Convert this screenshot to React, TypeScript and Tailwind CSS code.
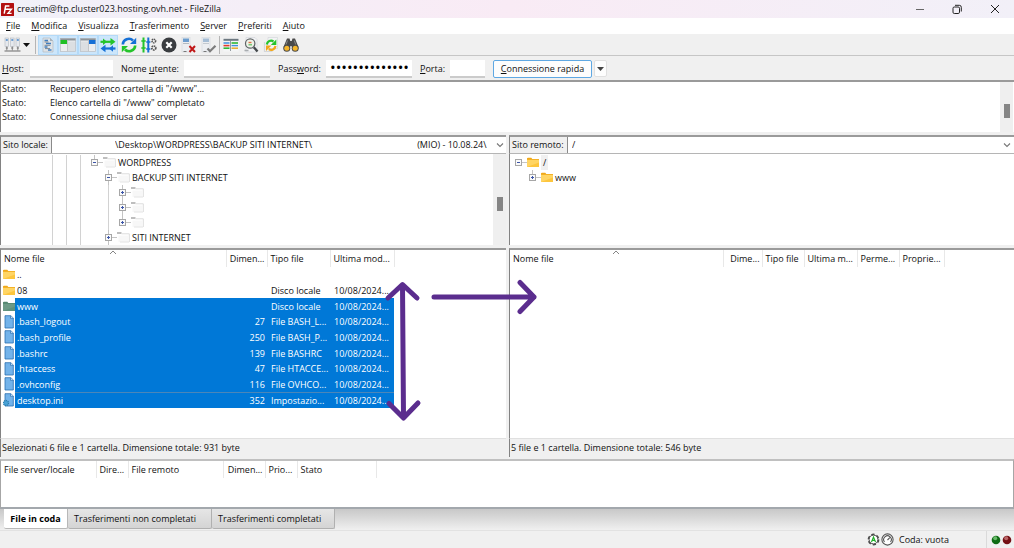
import React, { type ReactNode } from "react";

/* ---------- small drawings ---------- */

function Svg({ children, w = 16, h = 16 }: { children: ReactNode; w?: number; h?: number }) {
  return (
    <svg width={w} height={h} viewBox={`0 0 ${w} ${h}`} fill="none" aria-hidden="true" className="shrink-0">
      {children}
    </svg>
  );
}

function Logo() {
  return (
    <Svg w={13} h={13}>
      <rect width="13" height="13" rx="0.5" fill="#b30f10" />
      <path d="M3.2 10.6 4.6 3h3.8M4 6.3h3" stroke="#fff" strokeWidth="1.5" />
      <path d="M6.6 6.2h3.9L7 10.4h3.6" stroke="#fff" strokeWidth="1.4" />
    </Svg>
  );
}

function SitesIcon() {
  return (
    <Svg w={17}>
      {[1, 6.5, 12].map((x) => (
        <g key={x}>
          <rect x={x} y="1" width="3.6" height="8.500" fill="#e6e9ed" stroke="#b4bac1" strokeWidth="0.600" />
          <rect x={x + 0.8} y="2" width="2" height="2" fill="#6f9fd2" />
          <path d={`M${x + 1.8} 9.500v4`} stroke="#8a8a8a" />
          <circle cx={x + 1.8} cy="11" r="1.100" fill="#8a8a8a" />
        </g>
      ))}
      <path d="M0.500 14h16" stroke="#808080" strokeWidth="1.200" />
    </Svg>
  );
}

function LogIcon() {
  return (
    <Svg>
      <path d="M3 1h7l3 3v11H3z" fill="#dfe4e8" stroke="#b2b9bf" strokeWidth="0.7" />
      <path d="M4.500 3.500h3.500M6 6.500h5M4.500 10h3M8 13h3.500" stroke="#3f7dc0" strokeWidth="1.300" />
      <path d="M4.500 5h4M4.500 8.300h6M5 11.600h5" stroke="#7f8890" />
      <path d="M10 1v3h3" fill="#a9b1b8" />
    </Svg>
  );
}

function LocalTreeIcon() {
  return (
    <Svg>
      <rect x="0.5" y="1.5" width="15" height="13" fill="#eceef0" stroke="#b9bdc1" strokeWidth="0.7" />
      <rect x="0.5" y="1.5" width="15" height="2" fill="#8d9499" />
      <rect x="0.5" y="3" width="6.5" height="4" fill="#1fbf24" />
      <path d="M7.5 4v10.5" stroke="#c3c6c9" />
      <rect x="8" y="4.5" width="7" height="9.5" fill="#dcdfe2" />
    </Svg>
  );
}

function RemoteTreeIcon() {
  return (
    <Svg>
      <rect x="0.5" y="1.5" width="15" height="13" fill="#eceef0" stroke="#b9bdc1" strokeWidth="0.7" />
      <rect x="0.5" y="1.5" width="15" height="2" fill="#8d9499" />
      <rect x="1" y="4.5" width="7" height="9.5" fill="#dcdfe2" />
      <rect x="9" y="3" width="6.5" height="4" fill="#1670d6" />
      <path d="M8.5 4v10.5" stroke="#c3c6c9" />
    </Svg>
  );
}

function QueueIcon() {
  return (
    <Svg>
      <path d="M0.500 4.800h12" stroke="#25c42b" strokeWidth="2.200" />
      <path d="m10.500 1 5 3.800-5 3.800zM3 1.500l4 3.300-4 3.300z" fill="#25c42b" />
      <path d="M3.500 11.500h12" stroke="#1670d6" strokeWidth="2.200" />
      <path d="m5.500 7.700-5 3.800 5 3.800zM13 8.200l-4 3.300 4 3.300z" fill="#1670d6" />
    </Svg>
  );
}

function RefreshIcon() {
  return (
    <Svg>
      <path d="M1.800 7.500A6 6 0 0 1 12 3.500" stroke="#1670d6" strokeWidth="2.600" />
      <path d="M15.200 0.800v6.200H9z" fill="#1670d6" />
      <path d="M14.200 8.500A6 6 0 0 1 4 12.500" stroke="#25c42b" strokeWidth="2.600" />
      <path d="M0.800 15.200V9H7z" fill="#25c42b" />
    </Svg>
  );
}

function ProcessIcon() {
  return (
    <Svg>
      <path d="M2.500 0.500v15" stroke="#25c42b" strokeWidth="2" />
      <path d="M0.300 4h4.400M0.300 11h4.400" stroke="#25c42b" strokeWidth="1.600" />
      <path d="M7.300 0.500v15" stroke="#1670d6" strokeWidth="2" />
      <path d="M5.200 5h4.200M5.200 12h4.200" stroke="#1670d6" strokeWidth="1.600" />
      <circle cx="12.800" cy="4" r="1.800" stroke="#555" strokeWidth="1.600" strokeDasharray="1.300 0.600" />
      <circle cx="12.800" cy="11" r="2" stroke="#555" strokeWidth="1.700" strokeDasharray="1.500 0.600" />
    </Svg>
  );
}

function CancelIcon() {
  return (
    <Svg>
      <circle cx="8" cy="8" r="7.500" fill="#3a3d40" />
      <path d="m5.300 5.300 5.400 5.400m0-5.400-5.400 5.400" stroke="#fff" strokeWidth="2.200" />
    </Svg>
  );
}

function DisconnectIcon() {
  return (
    <Svg>
      <rect x="1" y="0.500" width="8" height="14.500" fill="#eceef1" stroke="#d4d8dc" strokeWidth="0.600" />
      <rect x="2" y="1.500" width="6" height="3.500" fill="#6c9dce" />
      <path d="M2 6.500h6" stroke="#b4bbc2" />
      <path d="m8.500 9 5.500 6m0-6-5.500 6" stroke="#c01818" strokeWidth="2" />
      <path d="M2.500 14.500h3" stroke="#777" />
    </Svg>
  );
}

function ReconnectIcon() {
  return (
    <Svg>
      <rect x="1" y="0.500" width="8" height="14.500" fill="#eceef1" stroke="#d4d8dc" strokeWidth="0.600" />
      <rect x="2" y="1.500" width="6" height="3.500" fill="#a5bdd5" />
      <path d="M2 6.500h6" stroke="#c4cad0" />
      <path d="m6.500 11.500 2.500 2.700 5.500-5.500" stroke="#7d7d7d" strokeWidth="2.200" />
      <path d="M2.500 14.500h3" stroke="#777" />
    </Svg>
  );
}

function FilterIcon() {
  return (
    <Svg>
      <rect x="0.500" y="1.500" width="15" height="13" fill="#f4f5f6" />
      <path d="M0.500 2.800h15" stroke="#6d7880" strokeWidth="2" />
      <path d="M0.500 6h6" stroke="#3f8fe0" strokeWidth="1.500" />
      <path d="M0.500 8.600h6" stroke="#e23b2e" strokeWidth="1.600" />
      <path d="M0.500 11.200h6" stroke="#2db834" strokeWidth="1.600" />
      <path d="M8.500 6h6.500" stroke="#2db834" strokeWidth="1.600" />
      <path d="M8.500 8.600h6.500" stroke="#3f8fe0" strokeWidth="1.400" />
      <path d="M8.500 11.200h6.500" stroke="#e7a92c" strokeWidth="1.500" />
      <path d="M7.500 3v11" stroke="#7b858c" strokeWidth="0.800" />
    </Svg>
  );
}

function SearchIcon() {
  return (
    <Svg>
      <path d="M3 0.500h9l2 2V15H3z" fill="#f1f2f4" stroke="#d0d4d8" strokeWidth="0.600" />
      <circle cx="7.200" cy="6.500" r="4.700" fill="#eef3e8" stroke="#5f6366" strokeWidth="1.200" />
      <path d="M5.500 5.500h3" stroke="#e0704a" strokeWidth="1.400" />
      <path d="M5.500 7.800h3.500" stroke="#58bd5c" strokeWidth="1.200" />
      <path d="m10.800 10.200 3.700 4.300" stroke="#44484b" strokeWidth="2.400" />
      <path d="M1.500 13.500h4" stroke="#a9adb0" strokeWidth="1.500" />
    </Svg>
  );
}

function SyncIcon() {
  return (
    <Svg>
      <path d="M5 0.500h9.500v11H5z" fill="#f3f4f5" stroke="#d0d4d8" strokeWidth="0.600" />
      <path d="M1.500 5v9.500h8" stroke="#d4d7da" strokeWidth="1.200" />
      <path d="M3.800 7.500A4.300 4.300 0 0 1 10.500 4.500" stroke="#25c42b" strokeWidth="2.200" />
      <path d="M13.300 2.500v5.500H7.800z" fill="#25c42b" />
      <path d="M12.500 9A4.300 4.300 0 0 1 5.800 12" stroke="#f2a71b" strokeWidth="2.200" />
      <path d="M3 14V8.500h5.500z" fill="#f2a71b" />
    </Svg>
  );
}

function BinocularsIcon() {
  return (
    <Svg>
      <path d="M4 1.500h2.500L7.300 4h1.400l.8-2.500H12l3.700 9H9L8.500 9h-1L7 10.500H.3z" fill="#4a4a4a" />
      <circle cx="3.800" cy="11.300" r="3.500" fill="#4a4a4a" />
      <circle cx="12.200" cy="11.300" r="3.500" fill="#4a4a4a" />
      <circle cx="3.800" cy="11.300" r="2.500" fill="#f5b52a" />
      <circle cx="12.200" cy="11.300" r="2.500" fill="#f5b52a" />
      <path d="M4.500 3.500 3 7.500M11.300 3.500l1.400 4" stroke="#8a8a8a" />
    </Svg>
  );
}

function Folder({ tone = "yellow" }: { tone?: "yellow" | "green" | "pale" }) {
  if (tone === "pale") {
    return (
      <Svg w={13} h={11}>
        <path d="M0 1h4.500" stroke="#a3a3a3" strokeWidth="1.400" />
        <path d="M4.500 1.800h8M12.300 2v8" stroke="#dcdcdc" />
        <path d="M1.500 3.500H12V10H1.500z" fill="#f7f7f7" />
        <path d="M3 10h9" stroke="#e4e4e4" />
      </Svg>
    );
  }
  const green = tone === "green";
  return (
    <Svg w={12} h={11}>
      <path d="M0 1.500C0 1 .4.700 1 .700h3.300l1 1.300H12v2H0z" fill={green ? "#54866f" : "#f0a818"} />
      <path d="M0 2.800h12v7.200H0z" fill={green ? "#6d9a86" : "#ffd564"} />
      <path d="M0 10 12 5.500V10z" fill={green ? "#5f917d" : "#fdc63e"} />
    </Svg>
  );
}

function DocIcon({ gear }: { gear?: boolean }) {
  return (
    <Svg w={12} h={14}>
      <path d="M2 .700h5.800L10.300 3v10H2z" fill="#73b3ea" stroke="#2a6fb0" strokeWidth="0.800" />
      <path d="M7.500.700V3.300h2.800" fill="#d5e9fa" stroke="#2a6fb0" strokeWidth="0.700" />
      {gear && <circle cx="3" cy="10" r="2.500" fill="#4aa3d8" stroke="#2b7fae" strokeWidth="1.300" strokeDasharray="1.200 0.700" />}
    </Svg>
  );
}

function Expander({ open, up, down }: { open?: boolean; up?: boolean; down?: boolean }) {
  return (
    <Svg w={16} h={15}>
      {up && <path d="M7.500 0v4" stroke="#c4c4c4" />}
      {down && <path d="M7.500 11v4" stroke="#c4c4c4" />}
      <path d="M11 7.500h5" stroke="#c4c4c4" />
      <rect x="4.500" y="4.500" width="6" height="6" fill="#fafafa" stroke="#a6a6a6" />
      <path d="M6 7.500h3" stroke="#3c55a8" />
      {!open && <path d="M7.500 6v3" stroke="#3c55a8" />}
    </Svg>
  );
}

function Chevron() {
  return (
    <Svg w={8} h={6}>
      <path d="m1 1.500 3 3 3-3" stroke="#777" strokeWidth="1.100" />
    </Svg>
  );
}

function SortCaret() {
  return (
    <span className="pointer-events-none absolute inset-x-0 top-0 flex justify-center">
      <Svg w={8} h={5}>
        <path d="m1 4 3-3 3 3" stroke="#777" strokeWidth="0.900" />
      </Svg>
    </span>
  );
}

function Led({ light, dark }: { light: string; dark: string }) {
  return (
    <Svg w={10} h={10}>
      <circle cx="5" cy="5" r="4.300" fill={dark} />
      <circle cx="4.200" cy="3.300" r="2" fill={light} opacity="0.700" />
    </Svg>
  );
}

/* ---------- pieces ---------- */

const menus: [string, string][] = [
  ["F", "ile"],
  ["M", "odifica"],
  ["V", "isualizza"],
  ["T", "rasferimento"],
  ["S", "erver"],
  ["P", "referiti"],
  ["A", "iuto"],
];

function ToolButton({ label, pressed, children }: { label: string; pressed?: boolean; children: ReactNode }) {
  return (
    <button
      type="button"
      aria-label={label}
      aria-pressed={pressed}
      className={
        pressed
          ? "flex h-5 w-5 items-center justify-center border border-[#b4daf8] bg-[#cce6fb]"
          : "flex h-5 w-5 items-center justify-center"
      }
    >
      {children}
    </button>
  );
}

function Separator() {
  return <span className="h-[18px] w-px bg-[#b5b5b5]" />;
}

function ScrollBar({ thumb }: { thumb: string }) {
  return (
    <div className="flex w-[13px] shrink-0 justify-center bg-[#efefef]">
      <div className={thumb} />
    </div>
  );
}

type FileRow = { name: string; size: string; type: string; date: string; icon: ReactNode; selected: boolean; focus?: boolean };

const date = "10/08/2024...";
const localFiles: FileRow[] = [
  { name: "..", size: "", type: "", date: "", icon: <Folder />, selected: false },
  { name: "08", size: "", type: "Disco locale", date, icon: <Folder />, selected: false },
  { name: "www", size: "", type: "Disco locale", date, icon: <Folder tone="green" />, selected: true },
  { name: ".bash_logout", size: "27", type: "File BASH_L...", date, icon: <DocIcon />, selected: true },
  { name: ".bash_profile", size: "250", type: "File BASH_P...", date, icon: <DocIcon />, selected: true },
  { name: ".bashrc", size: "139", type: "File BASHRC", date, icon: <DocIcon />, selected: true },
  { name: ".htaccess", size: "47", type: "File HTACCE...", date, icon: <DocIcon />, selected: true },
  { name: ".ovhconfig", size: "116", type: "File OVHCO...", date, icon: <DocIcon />, selected: true },
  { name: "desktop.ini", size: "352", type: "Impostazio...", date, icon: <DocIcon gear />, selected: true, focus: true },
];

const headCell = "relative h-[17px] overflow-hidden border-r border-[#e8e8e8] p-0 pl-[3px] text-left font-normal whitespace-nowrap";
const sizeHeadCell = "relative h-[17px] overflow-hidden border-r border-[#e8e8e8] p-0 pr-[2px] text-right font-normal whitespace-nowrap";

function FileTableRow({ row }: { row: FileRow }) {
  const fill = row.selected
    ? row.focus
      ? "bg-[#0078d7] text-white shadow-[inset_0_1px_0_#4c86b8]"
      : "bg-[#0078d7] text-white"
    : "";
  return (
    <tr className="leading-[15px] whitespace-nowrap">
      <td className="h-px p-0">
        <div className="flex h-full items-stretch">
          <span className="flex w-[14px] items-center pl-[2px]">{row.icon}</span>
          <span className={`flex flex-1 items-center pl-[2px] ${fill}`}>{row.name}</span>
        </div>
      </td>
      <td className={`p-0 pr-[2px] text-right ${fill}`}>{row.size}</td>
      <td className={`p-0 pl-1 ${fill}`}>{row.type}</td>
      <td className={`p-0 pl-1 ${fill}`}>{row.date}</td>
    </tr>
  );
}

function TreeGuide({ line }: { line?: boolean }) {
  return <span className="flex w-[14px] justify-center">{line && <span className="w-px bg-[#d2d2d2]" />}</span>;
}

function TreeRow({
  guides,
  open,
  up,
  down,
  tone,
  label,
  current,
}: {
  guides: boolean[];
  open?: boolean;
  up?: boolean;
  down?: boolean;
  tone: "yellow" | "pale";
  label: string;
  current?: boolean;
}) {
  return (
    <li className="flex h-[15px]">
      {guides.map((line, i) => (
        <TreeGuide key={i} line={line} />
      ))}
      <Expander open={open} up={up} down={down} />
      <span className="flex items-center">
        <Folder tone={tone} />
      </span>
      <span className={current ? "ml-[2px] bg-[#f0f0f0] px-[2px] leading-[15px]" : "pl-[2px] leading-[15px]"}>{label}</span>
    </li>
  );
}

const panel = "border-t-2 border-l border-t-[#9a9a9a] border-l-[#828282] bg-white";
const field = "h-[18px] border-b-2 border-[#cbcbcb] bg-white px-1 outline-none";

export default function App() {
  const gap = "\u00a0".repeat(45);
  return (
    <div className="flex min-h-screen flex-col bg-[#f0f0f0] font-['Open_Sans','Noto_Sans',sans-serif] text-[9px] text-[#111111]">
      <header className="flex h-[18px] items-center bg-linear-to-r from-[#f1f1f9] via-[#f9ebf5] to-[#f2f0f8] pl-px">
        <Logo />
        <h1 className="pl-[3px]">creatim@ftp.cluster023.hosting.ovh.net - FileZilla</h1>
        <div className="ml-auto flex items-center gap-[24px] pr-[12px]">
          <button type="button" aria-label="Riduci a icona">
            <Svg w={14} h={14}>
              <path d="M4 7.500h8" stroke="#666" />
            </Svg>
          </button>
          <button type="button" aria-label="Ripristina">
            <Svg w={14} h={14}>
              <rect x="3" y="5" width="6.500" height="6.500" rx="1.300" stroke="#222" />
              <path d="M5 3.300h4.300a2 2 0 0 1 2 2v4.200" stroke="#222" />
            </Svg>
          </button>
          <button type="button" aria-label="Chiudi">
            <Svg w={14} h={14}>
              <path d="m3 3 8 8m0-8-8 8" stroke="#222" />
            </Svg>
          </button>
        </div>
      </header>

      <nav className="flex h-4 items-center gap-[11px] bg-white pl-[6px]">
        {menus.map(([key, rest]) => (
          <button key={key} type="button">
            <u>{key}</u>
            {rest}
          </button>
        ))}
      </nav>

      <div className="flex h-[22px] items-center border-b border-[#c6c6c6] pl-[2px]">
        <button type="button" aria-label="Gestore siti" className="flex h-5 w-5 items-center justify-center">
          <SitesIcon />
        </button>
        <button type="button" aria-label="Elenco siti" className="mr-1 flex h-5 w-[9px] items-center justify-center">
          <Svg w={7} h={4}>
            <path d="M0 0h7L3.500 4z" fill="#111" />
          </Svg>
        </button>
        <Separator />
        <span className="w-[2px]" />
        <ToolButton label="Registro messaggi" pressed><LogIcon /></ToolButton>
        <ToolButton label="Albero locale" pressed><LocalTreeIcon /></ToolButton>
        <ToolButton label="Albero remoto" pressed><RemoteTreeIcon /></ToolButton>
        <ToolButton label="Coda di trasferimento" pressed><QueueIcon /></ToolButton>
        <span className="w-px" />
        <ToolButton label="Aggiorna"><RefreshIcon /></ToolButton>
        <ToolButton label="Elabora coda"><ProcessIcon /></ToolButton>
        <ToolButton label="Annulla"><CancelIcon /></ToolButton>
        <ToolButton label="Disconnetti"><DisconnectIcon /></ToolButton>
        <ToolButton label="Riconnetti"><ReconnectIcon /></ToolButton>
        <Separator />
        <span className="w-px" />
        <ToolButton label="Filtri"><FilterIcon /></ToolButton>
        <ToolButton label="Confronto directory"><SearchIcon /></ToolButton>
        <ToolButton label="Navigazione sincronizzata"><SyncIcon /></ToolButton>
        <ToolButton label="Cerca file"><BinocularsIcon /></ToolButton>
      </div>

      <form className="flex h-6 items-center pt-px pl-[2px]">
        <label htmlFor="host" className="w-7"><u>H</u>ost:</label>
        <input id="host" className={`${field} w-[83px]`} />
        <label htmlFor="user" className="ml-2 w-[63px] whitespace-nowrap">Nome <u>u</u>tente:</label>
        <input id="user" className={`${field} w-[86px]`} />
        <label htmlFor="pass" className="ml-2 w-12 whitespace-nowrap">Pass<u>w</u>ord:</label>
        <input id="pass" type="password" defaultValue="12345678901234" className={`${field} w-[86px] text-[15px] text-black`} />
        <label htmlFor="port" className="ml-2 w-[30px]"><u>P</u>orta:</label>
        <input id="port" className={`${field} w-[35px]`} />
        <button type="button" className="ml-2 h-[18px] w-[99px] rounded-[2px] border border-[#5fa8e3] bg-[#fdfdfd] whitespace-nowrap">
          <u>C</u>onnessione rapida
        </button>
        <button type="button" aria-label="Connessioni recenti" className="ml-[2px] flex h-[17px] w-[13px] items-center justify-center rounded-[2px] border border-[#e0e0e0] bg-[#fdfdfd]">
          <Svg w={7} h={4}>
            <path d="M0 0h7L3.500 4z" fill="#444" />
          </Svg>
        </button>
      </form>

      <section className={`${panel} mb-[3px] flex h-[52px] pr-px`}>
        <dl className="grid flex-1 auto-rows-[14px] grid-cols-[48px_1fr] content-start pl-px leading-[14px]">
          <dt>Stato:</dt>
          <dd>Recupero elenco cartella di "/www"...</dd>
          <dt>Stato:</dt>
          <dd>Elenco cartella di "/www" completato</dd>
          <dt>Stato:</dt>
          <dd>Connessione chiusa dal server</dd>
        </dl>
        <ScrollBar thumb="mt-[22px] h-[14px] w-[6px] bg-[#858585]" />
      </section>

      <main className="relative flex flex-1">
        <section className="flex w-1/2 flex-col pr-px">
          <div className={`${panel} relative flex h-[19px] border-b border-b-[#b5b5b5]`}>
            <label htmlFor="local" className="flex w-[51px] shrink-0 items-center border-r border-[#8a8a8a] bg-[#f0f0f0] pl-[2px] whitespace-nowrap">Sito locale:</label>
            <select id="local" className="min-w-0 flex-1 appearance-none bg-white pl-[63px] outline-none">
              <option>{`\\Desktop\\WORDPRESS\\BACKUP SITI INTERNET\\${gap}(MIO) - 10.08.24\\`}</option>
            </select>
            <span className="pointer-events-none absolute inset-y-0 right-[2px] flex items-center"><Chevron /></span>
          </div>
          <div className="mb-[3px] flex h-[91px] border-l border-[#828282] bg-white">
            <ul className="flex-1 pt-px pl-11">
              <TreeRow guides={[true, true, true]} open up tone="pale" label="WORDPRESS" />
              <TreeRow guides={[true, true, true, false]} open up down tone="pale" label="BACKUP SITI INTERNET" />
              <TreeRow guides={[true, true, true, false, true]} up down tone="pale" label="" />
              <TreeRow guides={[true, true, true, false, true]} up down tone="pale" label="" />
              <TreeRow guides={[true, true, true, false, true]} up tone="pale" label="" />
              <TreeRow guides={[true, true, true, false]} up down tone="pale" label="SITI INTERNET" />
            </ul>
            <ScrollBar thumb="mt-[43px] h-[14px] w-[6px] bg-[#858585]" />
          </div>
          <div className={`${panel} flex-1`}>
            <table className="h-[158px] w-[393px] table-fixed border-collapse">
              <colgroup>
                <col className="w-[225px]" />
                <col className="w-[41px]" />
                <col className="w-[63px]" />
                <col className="w-[64px]" />
              </colgroup>
              <thead>
                <tr>
                  <th className={headCell}>Nome file<SortCaret /></th>
                  <th className={sizeHeadCell}>Dimen...</th>
                  <th className={headCell}>Tipo file</th>
                  <th className={headCell}>Ultima mod...</th>
                </tr>
              </thead>
              <tbody>
                {localFiles.map((row) => (
                  <FileTableRow key={row.name} row={row} />
                ))}
              </tbody>
            </table>
          </div>
          <p className="flex h-[19px] items-center border-t border-l border-t-[#e0e0e0] border-l-[#828282] pl-px">
            Selezionati 6 file e 1 cartella. Dimensione totale: 931 byte
          </p>
        </section>

        <section className="flex w-1/2 flex-col pl-[2px]">
          <div className={`${panel} relative flex h-[19px] border-b border-b-[#b5b5b5]`}>
            <label htmlFor="remote" className="flex w-[58px] shrink-0 items-center border-r border-[#8a8a8a] bg-[#f0f0f0] pl-[2px] whitespace-nowrap">Sito remoto:</label>
            <select id="remote" className="min-w-0 flex-1 appearance-none bg-white pl-1 outline-none">
              <option>/</option>
            </select>
            <span className="pointer-events-none absolute inset-y-0 right-[3px] flex items-center"><Chevron /></span>
          </div>
          <div className="mb-[3px] h-[91px] border-l border-[#828282] bg-white">
            <ul className="pt-px pl-px">
              <TreeRow guides={[]} open tone="yellow" label="/" current />
              <TreeRow guides={[false]} up tone="yellow" label="www" />
            </ul>
          </div>
          <div className={`${panel} flex-1`}>
            <table className="w-[434px] table-fixed border-collapse">
              <colgroup>
                <col className="w-[213px]" />
                <col className="w-[39px]" />
                <col className="w-[42px]" />
                <col className="w-[53px]" />
                <col className="w-[42px]" />
                <col className="w-[45px]" />
              </colgroup>
              <thead>
                <tr>
                  <th className={headCell}>Nome file<SortCaret /></th>
                  <th className={sizeHeadCell}>Dime...</th>
                  <th className={headCell}>Tipo file</th>
                  <th className={headCell}>Ultima m...</th>
                  <th className={headCell}>Perme...</th>
                  <th className={headCell}>Proprie...</th>
                </tr>
              </thead>
            </table>
          </div>
          <p className="flex h-[19px] items-center border-t border-l border-t-[#e0e0e0] border-l-[#828282] pl-px">
            5 file e 1 cartella. Dimensione totale: 546 byte
          </p>
        </section>

        <svg
          width="160"
          height="150"
          viewBox="0 0 160 150"
          fill="none"
          stroke="#5b2d8e"
          strokeWidth="5"
          strokeLinecap="round"
          strokeLinejoin="round"
          aria-hidden="true"
          className="pointer-events-none absolute top-[141px] left-[383px]"
        >
          <path d="M19.500 9 20.500 141M5 22 19.500 8.500 34 22M6 127.500 20.500 142 35 127" />
          <path d="M51 21H151M137 6.500 151 21 137 35.500" />
        </svg>
      </main>

      <section className="mt-[2px] h-[50px] border-t-2 border-r border-b-2 border-l border-t-[#c0c0c0] border-r-[#a6a6a6] border-b-[#a3a8ad] border-l-[#a6a6a6] bg-white">
        <table className="w-[375px] table-fixed border-collapse">
          <colgroup>
            <col className="w-[95px]" />
            <col className="w-[32px]" />
            <col className="w-[95px]" />
            <col className="w-[42px]" />
            <col className="w-[32px]" />
            <col className="w-[79px]" />
          </colgroup>
          <thead>
            <tr>
              <th className={headCell}>File server/locale</th>
              <th className={headCell}>Dire...</th>
              <th className={headCell}>File remoto</th>
              <th className={sizeHeadCell}>Dimen...</th>
              <th className={headCell}>Prio...</th>
              <th className={headCell}>Stato</th>
            </tr>
          </thead>
        </table>
      </section>

      <div role="tablist" className="flex h-[22px] items-start border-b border-[#e2e2e2] bg-linear-to-b from-[#c8c8c8] to-[#f0f0f0] pl-1">
        <button type="button" role="tab" aria-selected="true" className="h-5 w-16 rounded-b-[2px] border-r border-b border-[#b8b8b8] bg-white font-bold whitespace-nowrap text-black">
          File in coda
        </button>
        <button type="button" role="tab" aria-selected="false" className="h-5 w-36 rounded-b-[2px] border-r border-b border-[#b0b0b0] bg-linear-to-b from-[#e6e6e6] to-[#d4d4d4] pl-[6px] text-left whitespace-nowrap">
          Trasferimenti non completati
        </button>
        <button type="button" role="tab" aria-selected="false" className="h-5 w-[123px] rounded-b-[2px] border-r border-b border-[#b0b0b0] bg-linear-to-b from-[#e6e6e6] to-[#d4d4d4] pl-[6px] text-left whitespace-nowrap">
          Trasferimenti completati
        </button>
      </div>

      <footer className="flex h-[17px] items-center justify-end">
        <Svg w={13} h={13}>
          <circle cx="6.500" cy="6.500" r="5" stroke="#4a4a4a" strokeWidth="1.800" strokeDasharray="3.200 2" />
          <circle cx="6.500" cy="6.500" r="4.400" fill="#fff" stroke="#4a4a4a" />
          <path d="M4.500 9 6.500 4l2 5M5.200 7.300h2.600" stroke="#21b12a" strokeWidth="1.200" />
        </Svg>
        <span className="w-px" />
        <Svg w={13} h={13}>
          <circle cx="6.500" cy="6.500" r="5.600" fill="#fff" stroke="#555" strokeWidth="1.100" />
          <path d="M3.500 9A3.800 3.800 0 1 1 9.500 9M6.500 7l2.300-2.300" stroke="#555" strokeWidth="1.100" />
        </Svg>
        <span className="w-[92px] pl-[5px]">Coda: vuota</span>
        <span className="flex h-full items-center gap-px border-l border-[#dadada] pr-[2px] pl-1">
          <Led light="#8fdc8f" dark="#0f6b14" />
          <Led light="#d98a8a" dark="#741015" />
        </span>
      </footer>
    </div>
  );
}
